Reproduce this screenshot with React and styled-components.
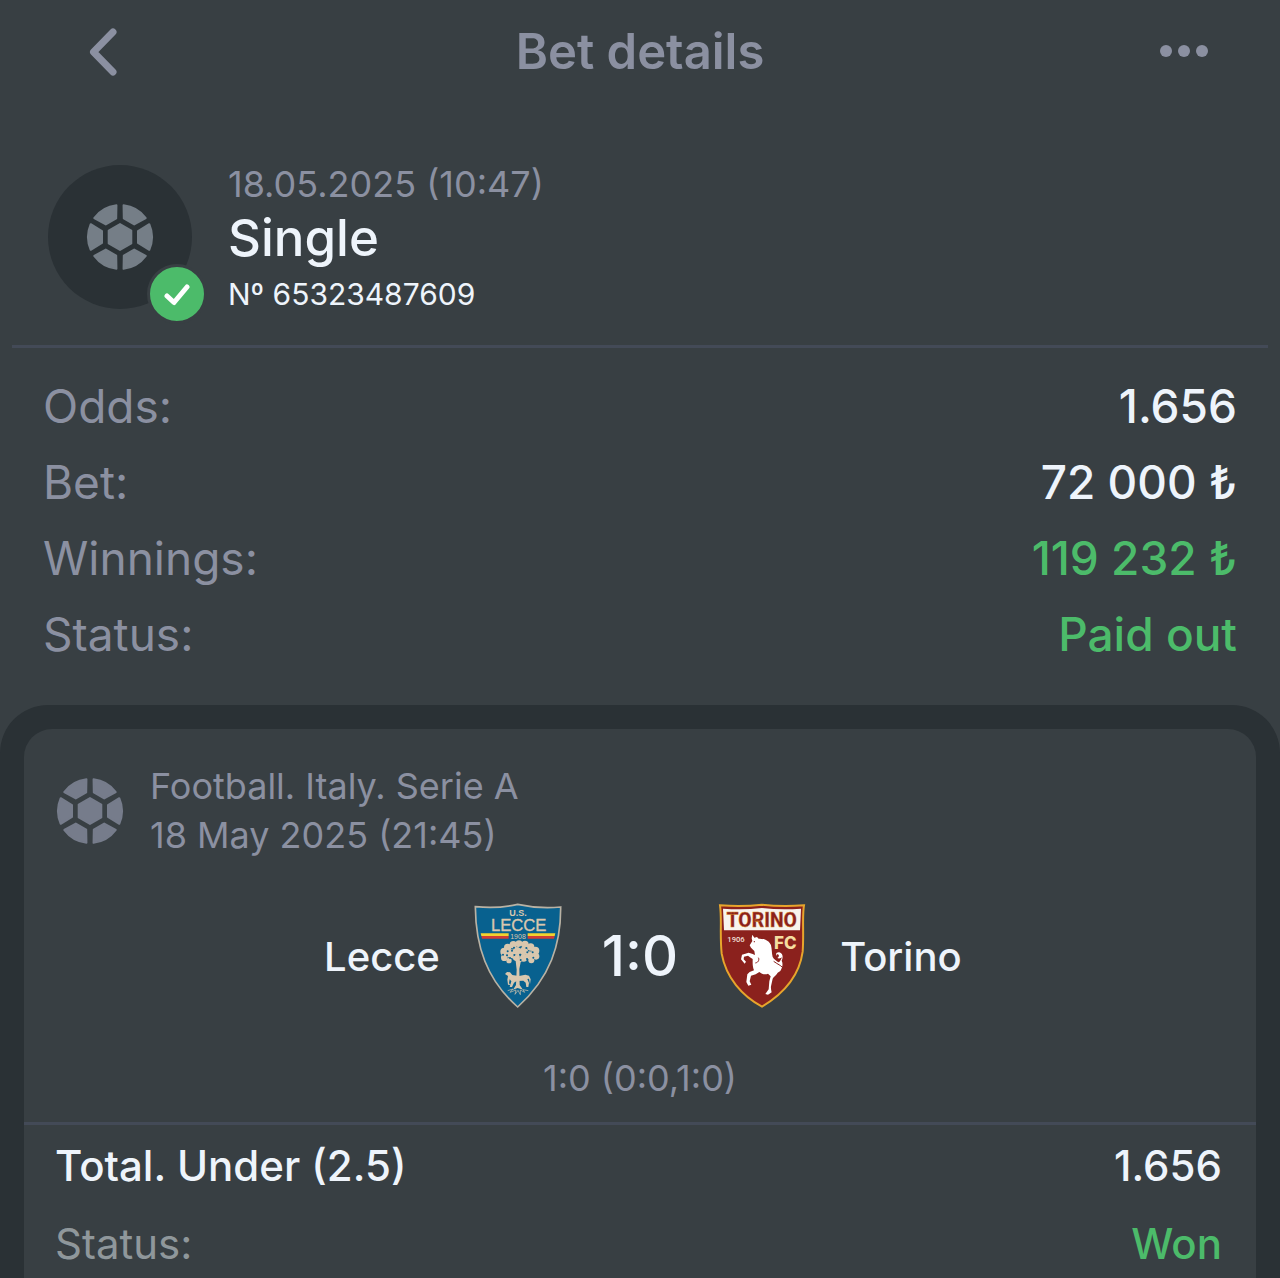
import React from "react";
import styled, { createGlobalStyle } from "styled-components";

const GlobalStyle = createGlobalStyle`
  * {
    box-sizing: border-box;
    margin: 0;
    padding: 0;
  }
  body {
    background-color: #383f43;
    font-family: Inter, "Liberation Sans", sans-serif;
    color: #eef4fb;
  }
`
const PageContainer = styled.div`
  min-height: 100vh;
  display: flex;
  flex-direction: column;
`
const StyledHeader = styled.header`
  height: 104px;
  padding: 0 68px;
  display: grid;
  grid-template-columns: 1fr auto 1fr;
  align-items: center;
`
const Title = styled.h1`
  font-size: 49px;
  line-height: 60px;
  font-weight: 600;
  color: #8b90a1;
`
const IconButton = styled.button`
  display: flex;
  border: none;
  background: none;
  color: #8b90a1;
  cursor: pointer;
  justify-self: ${(props) => props.$side};
`
const Summary = styled.section`
  margin: 0 12px;
  padding: 58px 36px 27px;
  display: flex;
  align-items: center;
  gap: 36px;
  border-bottom: 3px solid #434a57;
`
const Avatar = styled.div`
  position: relative;
  width: 144px;
  height: 144px;
  margin-bottom: 6px;
  border-radius: 50%;
  background-color: #2a3135;
  color: #757e87;
  display: flex;
  align-items: center;
  justify-content: center;
`
const WonBadge = styled.span`
  position: absolute;
  right: -15px;
  bottom: -15px;
  width: 60px;
  height: 60px;
  border: 3px solid #383f43;
  border-radius: 50%;
  background-color: #4cbb6a;
  display: flex;
  align-items: center;
  justify-content: center;
`
const SummaryText = styled.div`
  display: flex;
  flex-direction: column;
`
const BetDate = styled.time`
  font-size: 36px;
  line-height: 44px;
  color: #8b90a1;
`
const BetType = styled.h2`
  font-size: 51px;
  line-height: 64px;
  font-weight: 500;
`
const BetNumber = styled.p`
  font-size: 30px;
  line-height: 48px;
`
const Totals = styled.dl`
  padding: 21px 43px 32px;
`
const TotalsRow = styled.div`
  display: flex;
  justify-content: space-between;
  font-size: 46px;
  line-height: 75px;
  padding-bottom: 1px;

  dt {
    color: #8b90a1;
  }
  dd {
    font-weight: 500;
    color: ${(props) => (props.$won ? "#4cbb6a" : "#eef4fb")};
  }
`
const EventsPanel = styled.main`
  flex: 1;
  display: flex;
  flex-direction: column;
  padding: 24px 24px 0;
  border-radius: 48px 48px 0 0;
  background-color: #2a3135;
`
const EventCard = styled.article`
  flex: 1;
  border-radius: 28px 28px 0 0;
  background-color: #383f43;
`
const EventHeader = styled.header`
  padding: 33px 32px 0;
  display: flex;
  align-items: center;
  gap: 26px;
  font-size: 36px;
  line-height: 49px;
  color: #8b90a1;

  svg {
    color: #767c8b;
  }
`
const Match = styled.div`
  padding-top: 43px;
  display: grid;
  grid-template-columns: 1fr auto 1fr;
  align-items: center;
  gap: 40px;
`
const Team = styled.div`
  display: flex;
  flex-direction: ${(props) => (props.$home ? "row-reverse" : "row")};
  align-items: center;
  gap: 34px;
  font-size: 40px;
  font-weight: 500;
`
const Score = styled.strong`
  font-size: 56px;
  line-height: 60px;
  font-weight: 500;
`
const Periods = styled.p`
  padding: 45px 0 19px;
  font-size: 36px;
  line-height: 49px;
  text-align: center;
  color: #8b90a1;
  border-bottom: 3px solid #434a57;
`
const Outcome = styled.dl`
  padding: 16px 34px 8px 31px;
  display: flex;
  flex-direction: column;
  gap: 28px;
`
const OutcomeRow = styled.div`
  display: flex;
  justify-content: space-between;
  font-size: 42px;
  line-height: 50px;
  font-weight: 500;

  dt {
    font-weight: ${(props) => (props.$won ? 400 : 500)};
    color: ${(props) => (props.$won ? "#8f979b" : "#eef4fb")};
  }
  dd {
    color: ${(props) => (props.$won ? "#4cbb6a" : "#eef4fb")};
  }
`

const BallIcon = () => (
  <svg width="68" height="68" viewBox="-34 -34 68 68" fill="currentColor" stroke="currentColor" strokeWidth="2" strokeLinejoin="round" aria-hidden="true">
    <path d="M0 -13L11.3 -6.5V6.5L0 13L-11.3 6.5V-6.5Z" />
    {[0, 60, 120, 180, 240, 300].map((angle) => (
      <path key={angle} transform={`rotate(${angle})`} d="M18 -6L29.3 -12.8A32 32 0 0 1 29.3 12.8L18 6Z" />
    ))}
  </svg>
)

const LecceCrest = () => (
  <svg width="88" height="106" viewBox="25 26 264 318" fontFamily="Liberation Sans, sans-serif" textAnchor="middle" fill="#d9c7ae" role="img" aria-label="U.S. Lecce">
    <path d="M29 37Q98 44 156 30Q218 44 285 38C286 150 254 250 156 338C62 255 30 155 29 37Z" fill="#08618f" stroke="#b9b2a4" strokeWidth="5" />
    <text x="157" y="64" fontSize="27" fontWeight="700">U.S.</text>
    <text x="159" y="109" fontSize="50" stroke="#d9c7ae" strokeWidth="1">LECCE</text>
    <path d="M45 117H129V125H47ZM186 117H269L267 125H186Z" fill="#f2d22e" />
    <path d="M47 125H129V133H49ZM186 125H267L265 133H186Z" fill="#cf3d35" />
    <text x="157" y="133" fontSize="21">1908</text>
    <path d="M150 200L140 192L124 188L126 184L143 188L153 194L156 178L162 180L163 194L176 186L192 184L194 188L176 193L165 204L161 224L162 272L172 286L156 281L142 286L151 272L153 226Z" />
    {[[116, 172, 12], [126, 159, 11], [143, 151, 11], [160, 148, 10], [178, 150, 11], [195, 158, 11], [209, 169, 12], [211, 186, 10], [192, 183, 12], [174, 170, 13], [154, 170, 12], [136, 177, 12], [116, 190, 10], [130, 199, 8], [151, 190, 9], [174, 191, 11], [197, 198, 9]].map(([cx, cy, r]) => (
      <circle key={`${cx}-${cy}`} cx={cx} cy={cy} r={r} />
    ))}
    <g fill="#08618f">
      {[[126, 171], [145, 160], [164, 159], [182, 161], [201, 174], [163, 181], [185, 174], [146, 182], [124, 183], [203, 190], [184, 194], [139, 169], [112, 181], [133, 191], [165, 197]].map(([cx, cy]) => (
        <circle key={`${cx}-${cy}`} cx={cx} cy={cy} r="3" />
      ))}
    </g>
    <path d="M118 239L124 233L133 234L140 242L160 245L179 241L190 244L195 255L193 270L190 253L185 254L190 266L188 278H182L180 265L173 259L153 260L145 265L139 278H132L137 261L132 255L130 267L135 272L127 271L125 256L127 245Z" />
    <path d="M126 289L142 284L133 294L151 287L148 300L157 288L164 301L164 287L177 294L172 286L188 289" fill="none" stroke="#d9c7ae" strokeWidth="2" />
  </svg>
)

const TorinoCrest = () => (
  <svg width="88" height="106" viewBox="26 26 264 318" fontFamily="Roboto, sans-serif" textAnchor="middle" role="img" aria-label="Torino FC">
    <path d="M32 33Q100 38 158 31Q216 38 284 33C278 65 284 115 280 172C270 245 220 300 158 337C98 305 50 250 37 178C31 120 38 75 32 33Z" fill="#8b211d" stroke="#e7a52c" strokeWidth="6" />
    <path d="M41 43Q101 48 158 41Q215 48 275 43L272 108H44Z" fill="#f8f4ed" />
    <text x="157" y="98" fontSize="58" fontWeight="800" fill="#8b211d" stroke="#d58b28" strokeWidth="1">TORINO</text>
    <text x="80" y="143" fontSize="23" fontWeight="500" fill="#f0dfd7">1906</text>
    <text x="228" y="163" fontSize="51" fontWeight="800" fontFamily="Inter, sans-serif" fill="#f5dda0">FC</text>
    <path d="M129 121L135 130L143 128L148 133C164 132 181 140 185 153C188 165 187 176 190 188C194 195 202 200 207 204C212 202 216 195 218 187C216 191 210 194 204 191C210 187 210 181 205 180C202 180 201 183 202 186C197 178 203 173 210 174C221 177 222 189 217 199C222 209 219 220 213 230L205 235C201 242 193 247 190 253L185 276C184 282 186 289 187 294L176 301L168 299L178 285L180 261L184 246L176 238C168 242 158 240 150 233L139 240L125 244L121 261L126 271L117 274L111 263L114 240L121 233L134 228C129 215 130 204 130 194L124 190L116 184L104 187L103 195L110 202L106 208L95 195L98 181L118 175L128 178L137 182L135 170L125 160L121 153L129 140L127 132Z" fill="#fff" />
    <path d="M193 201C207 211 214 213 218 218M138 206C149 204 150 194 147 190" fill="none" stroke="#8b211d" strokeWidth="3" />
    <circle cx="135" cy="142" r="2" fill="#8b211d" />
  </svg>
)

export default function App() {
  return (
    <PageContainer>
      <GlobalStyle />
      <StyledHeader>
        <IconButton $side="start" aria-label="Back">
          <svg width="70" height="60" viewBox="0 0 70 60" fill="none" stroke="currentColor" strokeWidth="7" strokeLinecap="round" strokeLinejoin="round">
            <path d="M45 10L25.5 30L45 50" />
          </svg>
        </IconButton>
        <Title>Bet details</Title>
        <IconButton $side="end" aria-label="More">
          <svg width="56" height="20" viewBox="0 0 56 20" fill="currentColor">
            <circle cx="10" cy="9" r="6" />
            <circle cx="28" cy="9" r="6" />
            <circle cx="46" cy="9" r="6" />
          </svg>
        </IconButton>
      </StyledHeader>
      <Summary>
        <Avatar>
          <BallIcon />
          <WonBadge>
            <svg width="30" height="24" viewBox="0 0 30 24" fill="none" stroke="#fff" strokeWidth="5" strokeLinecap="round" strokeLinejoin="round" aria-hidden="true">
              <path d="M5 14L12 20.5L25 5" />
            </svg>
          </WonBadge>
        </Avatar>
        <SummaryText>
          <BetDate>18.05.2025 (10:47)</BetDate>
          <BetType>Single</BetType>
          <BetNumber>Nº 65323487609</BetNumber>
        </SummaryText>
      </Summary>
      <Totals>
        <TotalsRow>
          <dt>Odds:</dt>
          <dd>1.656</dd>
        </TotalsRow>
        <TotalsRow>
          <dt>Bet:</dt>
          <dd>72 000 ₺</dd>
        </TotalsRow>
        <TotalsRow $won>
          <dt>Winnings:</dt>
          <dd>119 232 ₺</dd>
        </TotalsRow>
        <TotalsRow $won>
          <dt>Status:</dt>
          <dd>Paid out</dd>
        </TotalsRow>
      </Totals>
      <EventsPanel>
        <EventCard>
          <EventHeader>
            <BallIcon />
            <div>
              <p>Football. Italy. Serie A</p>
              <p>18 May 2025 (21:45)</p>
            </div>
          </EventHeader>
          <Match>
            <Team $home>
              <LecceCrest />
              <span>Lecce</span>
            </Team>
            <Score>1:0</Score>
            <Team>
              <TorinoCrest />
              <span>Torino</span>
            </Team>
          </Match>
          <Periods>1:0 (0:0,1:0)</Periods>
          <Outcome>
            <OutcomeRow>
              <dt>Total. Under (2.5)</dt>
              <dd>1.656</dd>
            </OutcomeRow>
            <OutcomeRow $won>
              <dt>Status:</dt>
              <dd>Won</dd>
            </OutcomeRow>
          </Outcome>
        </EventCard>
      </EventsPanel>
    </PageContainer>
  )
}
